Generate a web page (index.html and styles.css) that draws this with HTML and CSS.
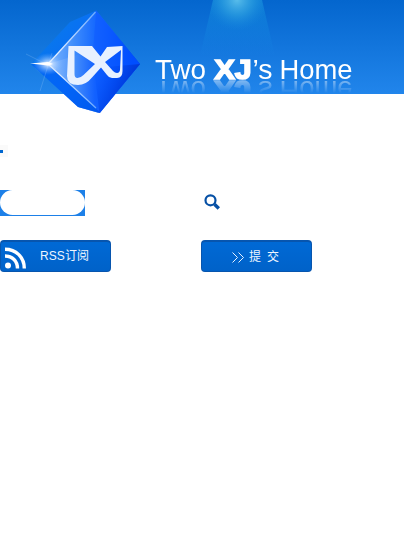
FILE: index.html
```
<!DOCTYPE html>
<html lang="zh-CN">
<head>
<meta charset="utf-8">
<title>Two XJ's Home</title>
<link rel="stylesheet" href="styles.css">
</head>
<body>
<header class="banner">
  <svg class="gem" width="155" height="116" viewBox="0 0 155 116" aria-hidden="true">
    <defs>
      <linearGradient id="body" x1="40" y1="30" x2="130" y2="95" gradientUnits="userSpaceOnUse"><stop offset="0" stop-color="#087be8"/><stop offset=".5" stop-color="#0a69fb"/><stop offset="1" stop-color="#0036d5"/></linearGradient>
      <linearGradient id="face" x1="48" y1="64" x2="132" y2="64" gradientUnits="userSpaceOnUse"><stop offset="0" stop-color="#9ac6ff"/><stop offset=".3" stop-color="#4a92fa"/><stop offset=".56" stop-color="#1261ff"/><stop offset="1" stop-color="#004eff"/></linearGradient>
      <linearGradient id="dark" x1="96" y1="80" x2="125" y2="95" gradientUnits="userSpaceOnUse"><stop offset="0" stop-color="#0050fa" stop-opacity=".2"/><stop offset="1" stop-color="#0037d6"/></linearGradient>
      <radialGradient id="glow"><stop offset="0" stop-color="#fff"/><stop offset=".25" stop-color="#dcecff" stop-opacity=".7"/><stop offset="1" stop-color="#73b1ff" stop-opacity="0"/></radialGradient>
      <linearGradient id="edge" x1="48" y1="0" x2="98" y2="0" gradientUnits="userSpaceOnUse"><stop offset="0" stop-color="#fff"/><stop offset="1" stop-color="#64a6ff"/></linearGradient>
    </defs>
    <path fill="url(#body)" d="M96.300 10.500 70 22 31 64l47 43 21.500 6L140 64Z"/>
    <path fill="url(#face)" d="M96.300 10.500 48 64l48 45 4 4 40-49Z"/>
    <path fill="url(#dark)" d="M94 68 140 64 99.500 113Z"/>
    <path fill="#2583ff" opacity=".25" d="M96.300 10.500 93 50 48 64Z"/>
    <path fill="#0062f5" opacity=".7" d="M31 64h17l48 45 3 4-21-6Z"/>
    <path fill="none" stroke="url(#edge)" stroke-width="1.300" d="M95.500 12 48 64l48 44"/>
    <ellipse cx="48" cy="64" rx="15" ry="11" fill="url(#glow)"/>
    <path stroke="#d9eaff" stroke-width=".5" opacity=".35" d="m40 91 12-38M26 54l30 15"/>
    <path fill="#fff" d="m30 63.500 18-1.500 5 2-5 1.500Z"/>
    <path fill="#e8f1ff" fill-rule="evenodd" d="M68.500 46H92l8.500 10.500L107 47l15.500-1v25q0 7-5.500 7h-5q-3 0-5-3l-6-7.500-9 10q-6 7.500-14 7.500-11 0-11-9ZM74.500 50.500V74q0 4 3 4 3 0 6-3L95 64ZM121 50l-16 12 8 9q2 2 4 2 2.500 0 3-3Z"/>
  </svg>
  <svg class="light" width="76" height="56" viewBox="0 0 76 56" aria-hidden="true">
    <defs>
      <linearGradient id="beam" x2="0" y2="1"><stop offset="0" stop-color="#1187d8" stop-opacity=".75"/><stop offset="1" stop-color="#168be8" stop-opacity="0"/></linearGradient>
      <radialGradient id="lamp" cx="37" cy="0" r="31" gradientUnits="userSpaceOnUse"><stop offset="0" stop-color="#59bdea"/><stop offset=".5" stop-color="#2d9fe0" stop-opacity=".65"/><stop offset="1" stop-color="#1586dd" stop-opacity="0"/></radialGradient>
    </defs>
    <path fill="url(#beam)" d="M13 0h49l13 56H0Z"/>
    <path fill="url(#lamp)" d="M13 0h49l7 30H6Z"/>
  </svg>
  <svg class="title" width="205" height="36" viewBox="0 0 205 36" role="img" aria-label="Two XJ's Home">
    <text x="0" y="29" textLength="51" lengthAdjust="spacingAndGlyphs">Two</text>
    <text class="strong" x="59.500" y="29" textLength="37" lengthAdjust="spacingAndGlyphs">XJ</text>
    <text x="97.500" y="29" textLength="20" lengthAdjust="spacingAndGlyphs">’s</text>
    <text x="124.500" y="29" textLength="73" lengthAdjust="spacingAndGlyphs">Home</text>
  </svg>
</header>
<main>
  <div class="marker"></div>
  <div class="row search">
    <div class="cell"><div class="field"><svg width="85" height="26" viewBox="0 0 85 26"><path fill="#1d80e8" d="M0 0h85v26H0Z"/><rect width="85" height="25" rx="12.500" fill="#fff"/></svg></div></div>
    <svg class="lens" width="18" height="18" viewBox="0 0 18 18" aria-hidden="true"><circle cx="8.500" cy="7.300" r="5" fill="none" stroke="#0650a5" stroke-width="2.200"/><path stroke="#0650a5" stroke-width="3.400" d="m12.500 11.300 4.300 4.200"/></svg>
  </div>
  <div class="row">
    <div class="cell">
      <a class="button rss">
        <svg width="24" height="24" viewBox="0 0 24 24" aria-hidden="true"><g fill="none" stroke="#fff" stroke-width="3.400"><path d="M1 3.200c11 0 19.300 8 19.300 19.300M1 10c7.400 0 12.500 5 12.500 12.500"/></g><circle cx="4" cy="19.500" r="3" fill="#fff"/></svg>
        <span>RSS订阅</span>
      </a>
    </div>
    <a class="button submit">
      <svg width="12" height="11" viewBox="0 0 12 11" fill="none" stroke="#e8f3ff" aria-hidden="true"><path d="m.5.5 5 5-5 5M6.500.5l5 5-5 5"/></svg>
      <span>提</span><span>交</span>
    </a>
  </div>
</main>
</body>
</html>
```
FILE: styles.css
```
body {
  margin: 0;
  background: #fff;
  font-family: "Liberation Sans", "Noto Sans CJK SC", sans-serif;
}
.banner {
  position: relative;
  height: 94px;
  background: linear-gradient(#0466ce, #2185eb);
  display: flex;
  align-items: flex-start;
}
.gem { flex: none; position: relative; }
.light {
  position: absolute;
  left: 200px;
  top: 0;
}
.title {
  position: relative;
  flex: none;
  margin-top: 50px;
  fill: #fff;
  font-size: 28px;
  -webkit-box-reflect: below -12px linear-gradient(transparent 47%, rgba(255, 255, 255, .45) 83%);
}
.strong {
  font-weight: bold;
  stroke: #fff;
  stroke-width: 1.700px;
}
.marker {
  width: 8px;
  height: 12px;
  margin-top: 51px;
  background: linear-gradient(#0067cf, #0067cf) 0 5px / 3px 3px no-repeat #fafafa;
}
.row { display: flex; align-items: flex-start; }
.search { margin: 33px 0 24px; }
.cell { width: 201px; flex: none; }
.field { height: 26px; }
.field svg { display: block; }
.lens { margin: 3px 0 0 1px; }
.button {
  display: flex;
  align-items: center;
  box-sizing: border-box;
  width: 111px;
  height: 32px;
  border: 1px solid #0755ae;
  border-top-width: 2px;
  border-radius: 4px;
  background: linear-gradient(#0069d5, #0062c9);
  color: #eef6ff;
  font-size: 12px;
  line-height: 16px;
}
.rss svg { margin: 2px 0 0 3px; }
.rss span { margin: -2px 0 0 12px; letter-spacing: .1px; }
.submit { padding: 0 0 0 30px; }
.submit span { margin-left: 6px; }
.submit svg { margin-top: 2px; }
.submit svg + span { margin-left: 5px; }
```
